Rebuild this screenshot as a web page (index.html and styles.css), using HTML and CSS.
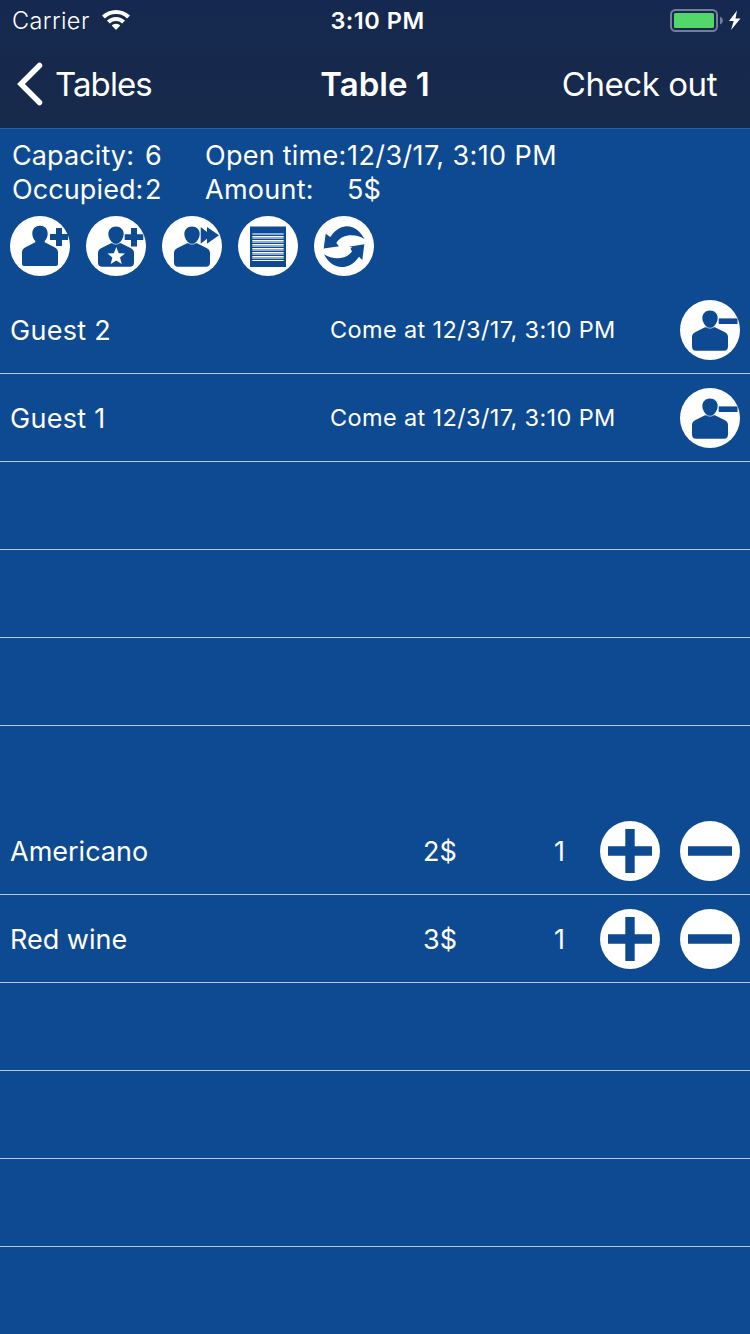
FILE: index.html
```html
<!DOCTYPE html>
<html lang="en">
<head>
<meta charset="utf-8">
<title>Table 1</title>
<link rel="stylesheet" href="styles.css">
</head>
<body>
<svg class="defs" width="0" height="0">
  <defs>
    <g id="disc"><circle cx="30" cy="30" r="30" fill="#fff"/></g>
    <g id="person">
      <path d="M12 37Q12 33.500 15.500 32L25 27.300H35L44.500 32Q48 33.500 48 37V46.500Q48 50.700 43.800 50.700H16.200Q12 50.700 12 46.500z"/>
      <path d="M30 10.400c4.600 0 7.700 3.200 7.700 7.600 0 4-2.500 7-4.700 9.200q-3 1.900-6 0c-2.200-2.200-4.700-5.200-4.700-9.200 0-4.400 3.100-7.600 7.700-7.600z"/>
      <path d="M25.500 26.200Q30 30.400 34.500 26.200" fill="none" stroke="#dbe5f0" stroke-width=".7"/>
    </g>
    <g id="guest-minus"><use href="#disc"/><use href="#person"/><path d="M38.700 18.400h18.800v5.600H38.700z"/></g>
    <g id="plus"><use href="#disc"/><path d="M25.300 8h9.400v17.300H52v9.400H34.700V52h-9.400V34.700H8v-9.400h17.300z"/></g>
    <g id="minus"><use href="#disc"/><path d="M8 25.300h44v9.400H8z"/></g>
  </defs>
</svg>
<main class="screen">
  <header class="top">
    <div class="status">
      <div class="carrier">
        <span class="carrier-name">Carrier</span>
        <svg class="wifi" viewBox="0 0 28 20" fill="#fff"><path d="M14 0C8.600 0 3.700 2.100 0 5.600L2.900 8.600A16 16 0 0 1 25.100 8.600L28 5.600C24.300 2.100 19.400 0 14 0z"/><path d="M14 6.900c-3.500 0-6.700 1.400-9.100 3.700l2.900 2.900a9 9 0 0 1 12.400 0l2.900-2.900C20.700 8.300 17.500 6.900 14 6.900z"/><path d="M14 13.800c-1.700 0-3.200.7-4.300 1.800L14 20l4.300-4.400c-1.100-1.100-2.600-1.800-4.300-1.800z"/></svg>
      </div>
      <span class="clock">3:10 PM</span>
      <svg class="battery" viewBox="0 0 72 24"><rect x="1" y="1" width="46" height="21" rx="4.500" fill="none" stroke="#727f98" stroke-width="2"/><rect x="4" y="4" width="40" height="15" rx="1.500" fill="#53d769"/><path d="M50 7.500q3 1.500 3 4t-3 4z" fill="#727f98"/><path d="M67 1.500L59 12h4.700L61 21l9.500-11.500h-5z" fill="#fff"/></svg>
    </div>
    <nav class="nav">
      <div class="back">
        <svg class="chevron" viewBox="0 0 26 44"><path d="M22.500 3.500L4 22 22.500 40.500" fill="none" stroke="#fff" stroke-width="5.500" stroke-linecap="round"/></svg>
        <span class="back-label">Tables</span>
      </div>
      <h1 class="title">Table 1</h1>
      <span class="checkout">Check out</span>
    </nav>
  </header>
  <section class="info">
    <span class="cap">Capacity:</span><span class="num">6</span><span class="open">Open time:</span><span class="date">12/3/17, 3:10 PM</span>
    <span class="occ">Occupied:</span><span class="num">2</span><span class="amt">Amount:</span><span class="sum">5$</span>
  </section>
  <div class="tools">
    <svg class="icon" viewBox="0 0 60 60"><use href="#disc"/><path d="M30 9.700c4.500 0 7.700 3 7.700 7.800 0 3.500-1.200 5.500-3 7.500v1.300L44.500 31.300Q48 33 48 36.500V48Q48 50 46 50H14Q12 50 12 48V36.500Q12 33 15.500 31.300L25.300 26.300V25c-1.800-2-3-4-3-7.500 0-4.800 3.200-7.800 7.700-7.800z"/><path d="M46 12h6v6h6v6h-6v6h-6v-6h-6v-6h6z"/></svg>
    <svg class="icon" viewBox="0 0 60 60"><use href="#disc"/><use href="#person"/><path d="M45 12h6v6.300h6.300v5.700H51v6.500h-6V24h-6.300v-5.700H45z"/><path d="M30.300 31l2.400 6.200 6.300.3-5 4.100 1.800 6.400-5.500-3.600-5.600 3.600 1.700-6.400-5-4.100 6.500-.3z" fill="#fff"/></svg>
    <svg class="icon" viewBox="0 0 60 60"><use href="#disc"/><use href="#person"/><path d="M38.700 11l6.300 5V11L57 19.300l-12 8.400v-5l-6.300 5z"/></svg>
    <svg class="icon" viewBox="0 0 60 60"><use href="#disc"/><path d="M12 10.500h36V51H12z"/><path d="M14.300 18h31.400M14.300 22h31.400M14.300 26h31.400M14.300 30h31.400M14.300 34h31.400M14.300 38h31.400M14.300 42h31.400" stroke="#8fadd2" stroke-width="2"/><path d="M14.300 20.500h31.400M14.300 24.500h31.400M14.300 28.500h31.400M14.300 32.500h31.400M14.300 36.500h31.400M14.300 40.500h31.400M14.300 44.500h31.400" stroke="#fff"/></svg>
    <svg class="icon" viewBox="0 0 60 60"><use href="#disc"/><path d="M9.700 32.500L11.700 17.700l4.600 3.300C21 14 27 10.300 33 10.300c7.500 0 13 5 17.700 13C43 18 28.500 17 22.300 27l3 3.200z"/><path d="M50.300 28.300L48.300 44l-3.300-3.300C40 48 34 51 27.700 51 20 51 14 46 10 38.300 19 44 32 44 38 35.300l-3-4.600z"/><path d="M23 27.500C26 21 38 17.500 50 24.500 42 23 36 25 33.500 30L38 31.500C33 36 24 42 11.500 38 17 36 22 35.500 25.500 31z" fill="#fff"/></svg>
  </div>
  <section class="list guests">
    <div class="row"><span class="name">Guest 2</span><span class="come">Come at 12/3/17, 3:10 PM</span><svg class="icon" viewBox="0 0 60 60"><use href="#guest-minus"/></svg></div>
    <div class="row"><span class="name">Guest 1</span><span class="come">Come at 12/3/17, 3:10 PM</span><svg class="icon" viewBox="0 0 60 60"><use href="#guest-minus"/></svg></div>
    <div class="row"></div>
    <div class="row"></div>
    <div class="row"></div>
  </section>
  <section class="list orders">
    <div class="row"><span class="name">Americano</span><span class="price">2$</span><span class="qty">1</span><svg class="icon add" viewBox="0 0 60 60"><use href="#plus"/></svg><svg class="icon" viewBox="0 0 60 60"><use href="#minus"/></svg></div>
    <div class="row"><span class="name">Red wine</span><span class="price">3$</span><span class="qty">1</span><svg class="icon add" viewBox="0 0 60 60"><use href="#plus"/></svg><svg class="icon" viewBox="0 0 60 60"><use href="#minus"/></svg></div>
    <div class="row"></div>
    <div class="row"></div>
    <div class="row"></div>
  </section>
</main>
</body>
</html>
```
FILE: styles.css
```css
* { box-sizing: border-box; }
body {
  margin: 0;
  background: #0e4a92;
  color: #fff;
  font-family: Inter, "Liberation Sans", sans-serif;
  font-size: 27px;
}
.defs { display: block; }
.screen { width: 750px; height: 1334px; overflow: hidden; fill: #0e4a92; white-space: nowrap; }
.top { height: 129px; background: linear-gradient(#15284f, #172a4b); border-bottom: 1px solid #2461a5; }
.status {
  height: 40px;
  display: grid;
  grid-template-columns: 1fr auto 1fr;
  align-items: center;
  padding: 1px 8px 0 12px;
  font-size: 23.500px;
}
.carrier { display: flex; align-items: center; gap: 12px; }
.carrier-name { font-weight: 350; letter-spacing: 0.400px; }
.wifi { width: 28px; height: 20px; margin-top: -2px; }
.clock { font-weight: 600; letter-spacing: 0.500px; padding-left: 1px; }
.battery { width: 72px; height: 24px; justify-self: end; }
.nav {
  height: 88px;
  display: grid;
  grid-template-columns: 1fr auto 1fr;
  align-items: center;
  padding: 0 17px;
  font-size: 33px;
}
.back { display: flex; align-items: center; gap: 12px; }
.back-label { letter-spacing: -0.900px; }
.chevron { width: 26px; height: 44px; }
.title { margin: 0; font-size: 33px; font-weight: 600; }
.checkout { justify-self: end; margin-right: 16px; letter-spacing: -0.450px; }
.info {
  display: grid;
  grid-template-columns: 133px 60px 142px auto;
  grid-auto-rows: 34px;
  line-height: 34px;
  padding: 10px 12px 0;
  height: 87px;
}
.occ, .cap { letter-spacing: 0.100px; }
.open, .amt { letter-spacing: 0.250px; }
.date { letter-spacing: 0.400px; }
.tools { display: flex; gap: 16px; padding: 0 10px; height: 70px; }
.icon { width: 60px; height: 60px; flex: none; }
.row { height: 88px; display: flex; align-items: center; padding: 0 10px; box-shadow: inset 0 -1px #b9c5d9; }
.orders { margin-top: 81px; }
.guests .name { width: 320px; letter-spacing: 0.300px; }
.come { font-size: 23.500px; flex: 1; letter-spacing: 0.370px; padding-bottom: 2px; }
.orders .name { width: 413px; }
.price { width: 131px; }
.qty { flex: 1; }
.add { margin-right: 20px; }
```
